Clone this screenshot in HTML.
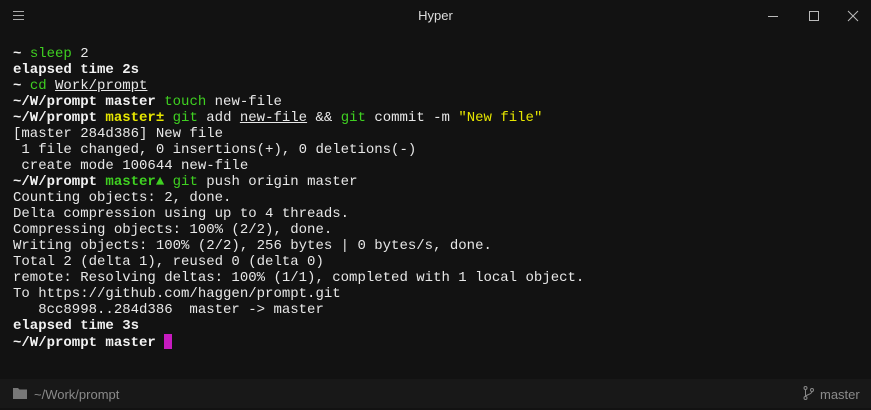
<!DOCTYPE html>
<html><head><style>
html,body{margin:0;padding:0;width:871px;height:408px;background:#121212;overflow:hidden}
.title{position:absolute;top:0;left:0;width:871px;height:32px;font-family:"Liberation Sans",sans-serif;font-size:13px;color:#ddd;text-align:center;line-height:32px}
pre{position:absolute;left:13px;top:46px;margin:0;font-family:"Liberation Mono",monospace;font-size:14px;line-height:16px;color:#e8e8e8}
b{font-weight:bold;color:#f2f2f2}
.g{color:#3fd021}.y{color:#e6e600;font-weight:bold}.gb{color:#3fd021;font-weight:bold}
u{text-decoration:underline}
.cur{display:inline-block;width:8px;height:15px;background:#c71bc0;vertical-align:-3px}
.status{position:absolute;left:0;top:379px;width:871px;height:29px;background:#181818;font-family:"Liberation Sans",sans-serif;font-size:13px;color:#8a8a8a;line-height:31px}
</style></head><body>
<svg style="position:absolute;left:13px;top:11px" width="11" height="10"><path d="M0 .5H11M0 4.5H11M0 8.5H11" stroke="#aaa" stroke-width="1"/></svg>
<div class="title">Hyper</div>
<svg style="position:absolute;left:767px;top:10px" width="100" height="14"><path d="M1 6.5H11" stroke="#bbb"/><path d="M42.5 1.5h9v9h-9z" stroke="#bbb" fill="none"/><path d="M81 1L91 11M91 1L81 11" stroke="#bbb"/></svg>
<pre><b>~</b> <span class="g">sleep</span> 2
<b>elapsed time 2s</b>
<b>~</b> <span class="g">cd</span> <u>Work/prompt</u>
<b>~/W/prompt master</b> <span class="g">touch</span> new-file
<b>~/W/prompt</b> <span class="y">master±</span> <span class="g">git</span> add <u>new-file</u> &amp;&amp; <span class="g">git</span> commit -m <span style="color:#e6e600">"New file"</span>
[master 284d386] New file
 1 file changed, 0 insertions(+), 0 deletions(-)
 create mode 100644 new-file
<b>~/W/prompt</b> <span class="gb">master▲</span> <span class="g">git</span> push origin master
Counting objects: 2, done.
Delta compression using up to 4 threads.
Compressing objects: 100% (2/2), done.
Writing objects: 100% (2/2), 256 bytes | 0 bytes/s, done.
Total 2 (delta 1), reused 0 (delta 0)
remote: Resolving deltas: 100% (1/1), completed with 1 local object.
To https://github.com/haggen/prompt.git
   8cc8998..284d386  master -&gt; master
<b>elapsed time 3s</b>
<b>~/W/prompt master</b> <span class="cur"></span></pre>
<div class="status">
<svg style="position:absolute;left:13px;top:9px" width="14" height="11"><path d="M0 0h5l1.5 1.5H14V11H0z" fill="#777"/></svg>
<span style="position:absolute;left:34px">~/Work/prompt</span>
<svg style="position:absolute;left:803px;top:7px" width="11" height="14"><circle cx="2.5" cy="2" r="1.5" fill="none" stroke="#888"/><circle cx="2.5" cy="12" r="1.5" fill="none" stroke="#888"/><circle cx="9" cy="4" r="1.5" fill="none" stroke="#888"/><path d="M2.5 3.5v7M9 5.5c0 3-6 3-6.5 5" stroke="#888" fill="none"/></svg>
<span style="position:absolute;left:820px">master</span>
</div>
</body></html>
